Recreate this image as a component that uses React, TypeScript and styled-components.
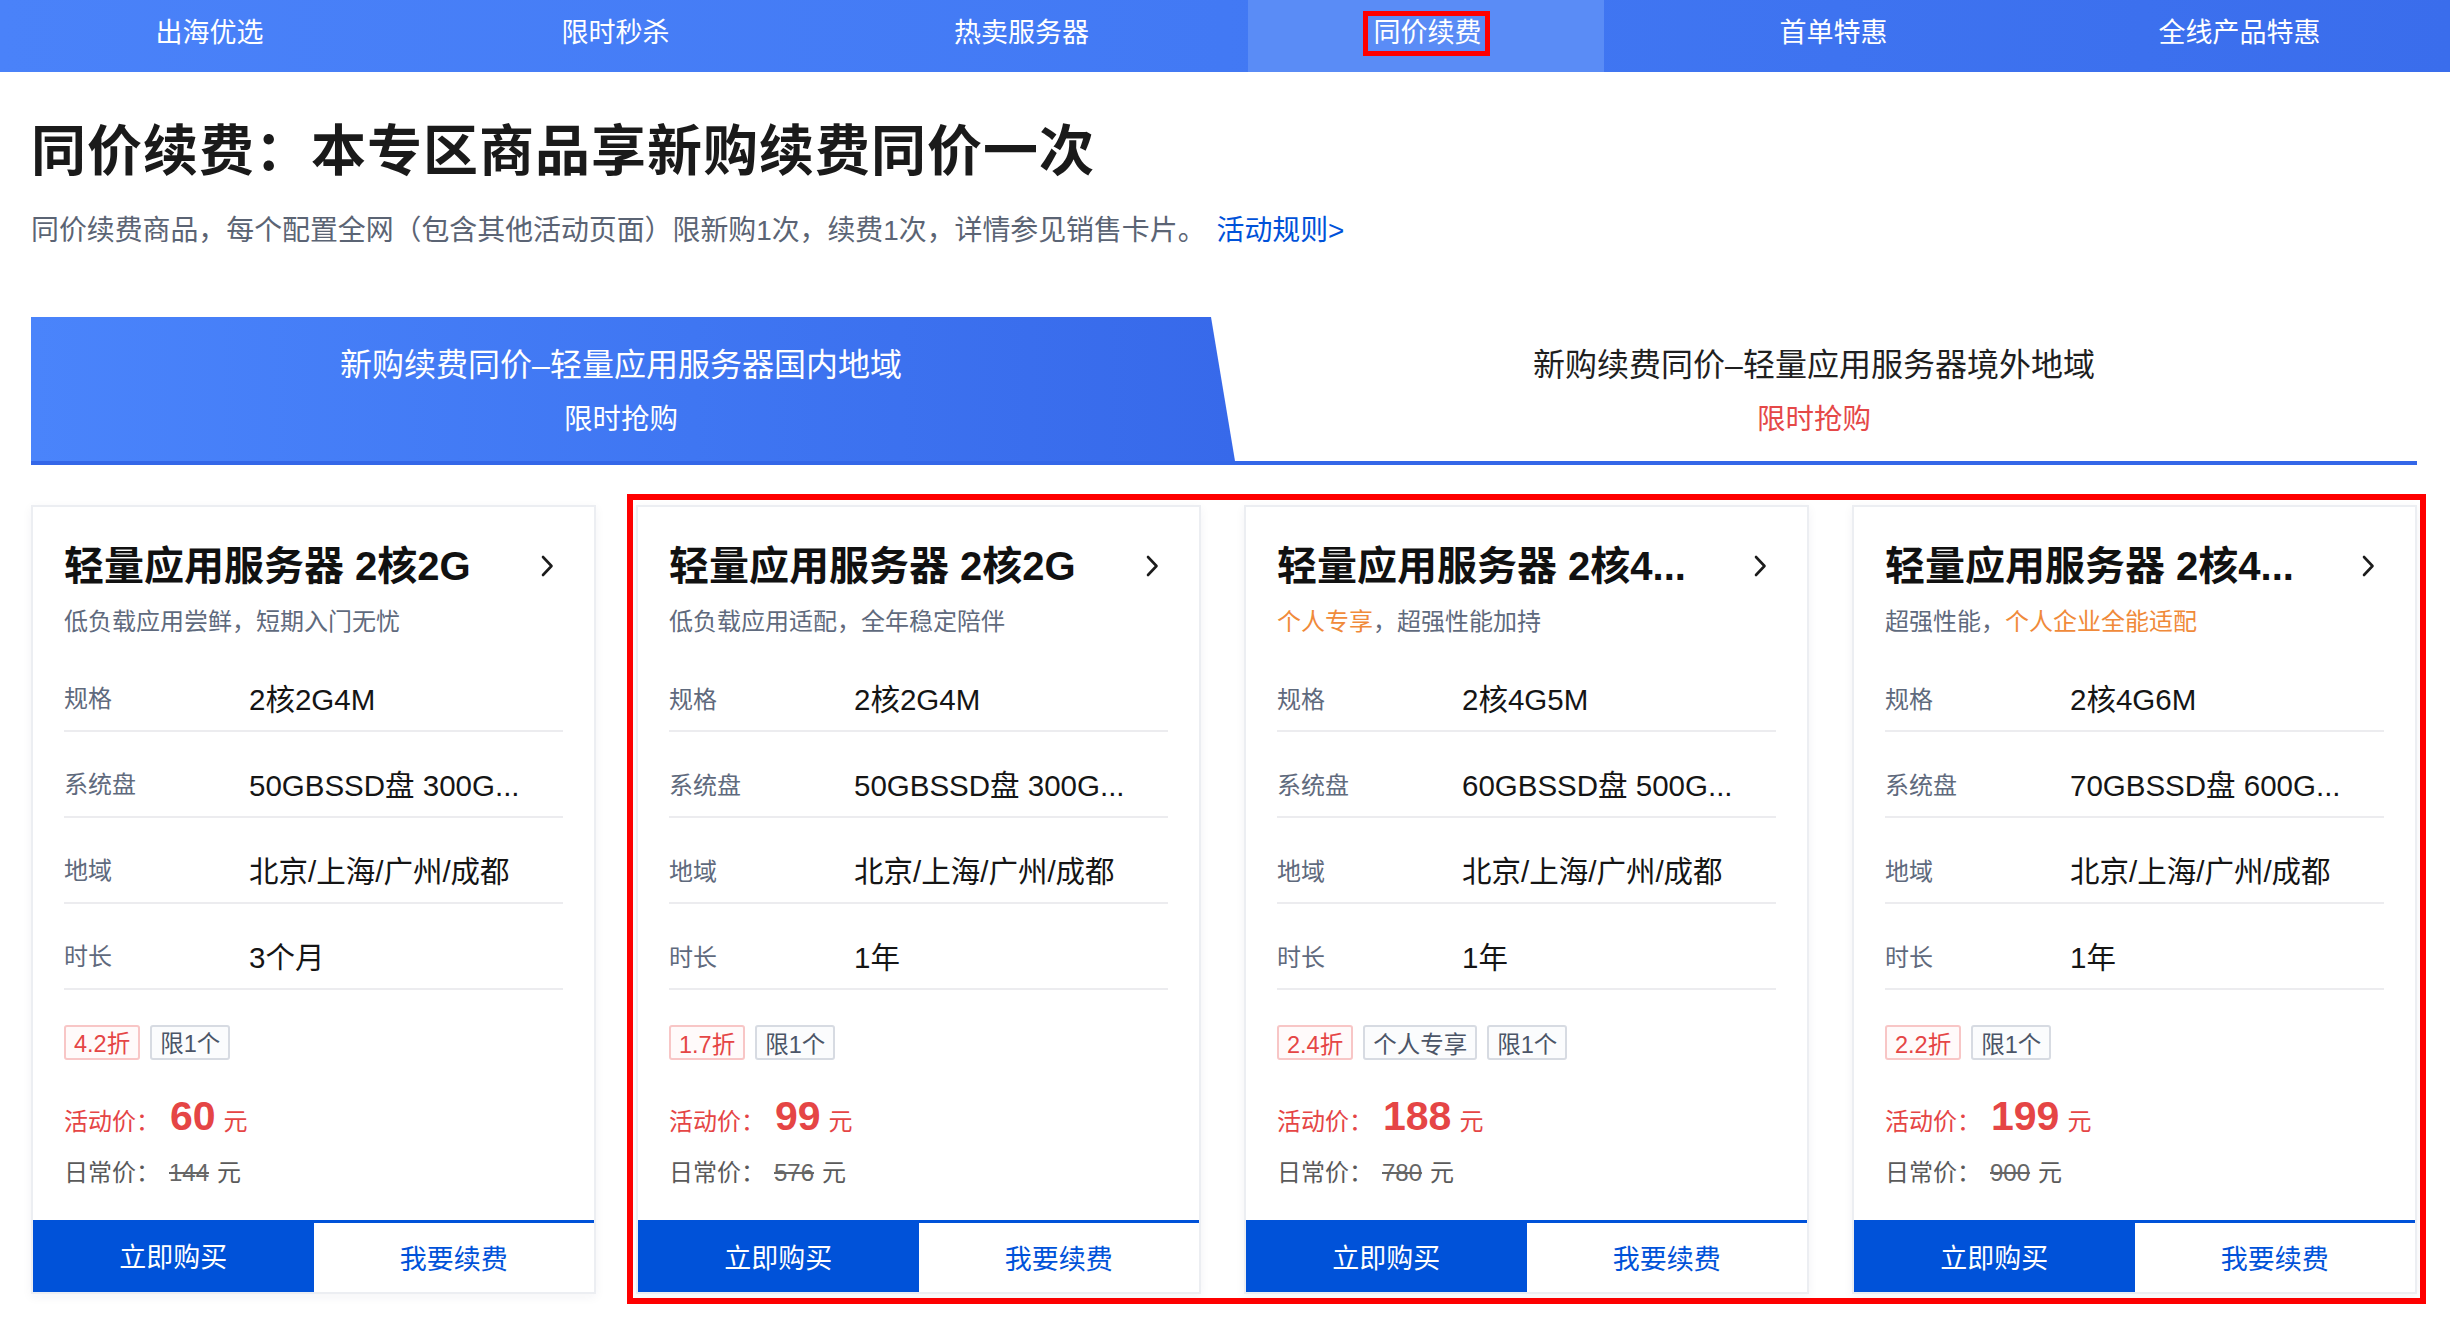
import React from "react";
import styled, { createGlobalStyle, css } from "styled-components";

const GlobalStyle = createGlobalStyle`
  html, body {
    margin: 0;
    padding: 0;
    background: #ffffff;
  }
  body {
    font-family: "Liberation Sans", "Noto Sans CJK SC", sans-serif;
    color: #222;
  }
  * { box-sizing: border-box; }
`;

const Page = styled.div`
  width: 2450px;
  min-height: 1322px;
  background: #fff;
`;

/* ---------- top navigation ---------- */
const Nav = styled.nav`
  height: 72px;
  display: flex;
  gap: 50px;
  padding: 0 34px 0 30px;
  background: linear-gradient(90deg, #4a82f9 0%, #4279f4 50%, #3a6dec 100%);
`;

const NavItem = styled.div<{ $active?: boolean }>`
  flex: 0 0 356px;
  display: flex;
  align-items: center;
  justify-content: center;
  padding-bottom: 6px;
  color: #fff;
  font-size: 27px;
  ${(p) =>
    p.$active &&
    css`
      background: #5a8cf6;
    `}
`;

const NavLabel = styled.span<{ $marked?: boolean }>`
  line-height: 35px;
  padding: 0 3px 0 6px;
  border: 5px solid transparent;
  ${(p) =>
    p.$marked &&
    css`
      border-color: #f00;
    `}
`;

/* ---------- heading ---------- */
const Content = styled.main`
  padding: 0 0 0 31px;
`;

const Heading = styled.h1`
  margin: 44px 0 0;
  font-size: 55px;
  line-height: 70px;
  font-weight: 600;
  color: #1a1a1a;
  letter-spacing: 1px;
`;

const Intro = styled.p`
  margin: 25px 0 0;
  font-size: 27.9px;
  line-height: 40px;
  color: #5b6474;
`;

const RuleLink = styled.a`
  margin-left: 11px;
  color: #0052d9;
  text-decoration: none;
`;

/* ---------- tabs ---------- */
const TabBar = styled.div`
  margin-top: 66px;
  width: 2386px;
  display: flex;
  border-bottom: 4px solid #3467e8;
`;

const Tab = styled.div<{ $active?: boolean }>`
  height: 144px;
  display: flex;
  flex-direction: column;
  align-items: center;
  padding: 28px 24px 0 0;
  ${(p) =>
    p.$active
      ? css`
          flex: 0 0 1204px;
          background: linear-gradient(90deg, #4a84fb 0%, #3f76f2 55%, #3769ea 100%);
          clip-path: polygon(0 0, calc(100% - 24px) 0, 100% 100%, 0 100%);
          color: #fff;
        `
      : css`
          flex: 1;
          color: #1f1f1f;
        `}
`;

const TabTitle = styled.div`
  font-size: 32px;
  line-height: 40px;
`;

const TabSub = styled.div<{ $active?: boolean }>`
  margin-top: 16px;
  font-size: 28.5px;
  line-height: 36px;
  color: ${(p) => (p.$active ? "#ffffff" : "#e54848")};
`;

/* ---------- cards ---------- */
const CardRow = styled.div`
  margin-top: 29px;
  display: flex;
  align-items: center;
  gap: 31px;
`;

const Highlight = styled.div`
  display: flex;
  gap: 43px;
  border: 6px solid #f00;
  padding: 5px 3px 4px 3px;
`;

const Card = styled.div`
  width: 565px;
  height: 789px;
  flex: none;
  display: flex;
  flex-direction: column;
  background: #fff;
  border: 2px solid #eceef2;
  box-shadow: 0 3px 10px rgba(30, 40, 70, 0.05);
`;

const CardBody = styled.div`
  padding: 34px 31px 0;
`;

const TitleRow = styled.div`
  display: flex;
  align-items: center;
  height: 50px;
`;

const CardTitle = styled.div`
  flex: 1;
  min-width: 0;
  font-size: 40px;
  line-height: 50px;
  font-weight: 600;
  color: #111;
  white-space: nowrap;
  overflow: hidden;
  text-overflow: ellipsis;
`;

const Chevron = styled.svg`
  flex: none;
  width: 16px;
  height: 24px;
  margin-right: 8px;
`;

const Subtitle = styled.div`
  margin-top: 14px;
  font-size: 24px;
  line-height: 34px;
  color: #5f6a7d;
`;

const Accent = styled.span`
  color: #f08a3a;
`;

const SpecList = styled.div`
  margin-top: 7px;
`;

const SpecRow = styled.div`
  height: 86px;
  padding-top: 18px;
  display: flex;
  align-items: center;
  border-bottom: 2px solid #ececef;
`;

const SpecLabel = styled.div`
  width: 185px;
  flex: none;
  font-size: 24px;
  color: #5f6a7d;
`;

const SpecValue = styled.div`
  font-size: 29.5px;
  color: #151515;
  white-space: nowrap;
`;

const TagRow = styled.div`
  margin-top: 35px;
  display: flex;
  gap: 10px;
`;

const Tag = styled.span<{ $red?: boolean }>`
  height: 35px;
  display: inline-flex;
  align-items: center;
  padding: 0 8px;
  font-size: 23.5px;
  border-radius: 3px;
  ${(p) =>
    p.$red
      ? css`
          color: #e54545;
          border: 2px solid #f8c6c6;
          background: #fffafa;
        `
      : css`
          color: #4b5567;
          border: 2px solid #d7dbe2;
          background: #fbfcfd;
        `}
`;

const PriceRow = styled.div`
  margin-top: 28px;
  height: 56px;
  display: flex;
  align-items: baseline;
  color: #e54545;
`;

const PriceLabel = styled.span`
  font-size: 24px;
`;

const PriceValue = styled.span`
  margin-left: 10px;
  font-size: 41px;
  font-weight: 600;
  line-height: 56px;
`;

const Unit = styled.span`
  margin-left: 8px;
  font-size: 24px;
`;

const RegularRow = styled.div`
  margin-top: 12px;
  height: 34px;
  display: flex;
  align-items: baseline;
  font-size: 24px;
  line-height: 34px;
  color: #5a5a5a;
`;

const Struck = styled.span`
  margin-left: 9px;
  text-decoration: line-through;
  color: #666;
`;

const ButtonBar = styled.div`
  margin-top: auto;
  height: 72px;
  display: flex;
`;

const Button = styled.button<{ $primary?: boolean }>`
  flex: 1;
  border: none;
  font-family: inherit;
  font-size: 27px;
  cursor: pointer;
  ${(p) =>
    p.$primary
      ? css`
          background: #0052d9;
          color: #fff;
        `
      : css`
          background: #fff;
          color: #0052d9;
          border-top: 3px solid #0052d9;
        `}
`;

type Sub = { t: string; accent?: boolean };
type CardData = {
  title: string;
  sub: Sub[];
  spec: string;
  disk: string;
  region: string;
  dur: string;
  tags: { t: string; red?: boolean }[];
  price: string;
  orig: string;
};

const cards: CardData[] = [
  {
    title: "轻量应用服务器 2核2G",
    sub: [{ t: "低负载应用尝鲜，短期入门无忧" }],
    spec: "2核2G4M",
    disk: "50GBSSD盘 300G...",
    region: "北京/上海/广州/成都",
    dur: "3个月",
    tags: [{ t: "4.2折", red: true }, { t: "限1个" }],
    price: "60",
    orig: "144",
  },
  {
    title: "轻量应用服务器 2核2G",
    sub: [{ t: "低负载应用适配，全年稳定陪伴" }],
    spec: "2核2G4M",
    disk: "50GBSSD盘 300G...",
    region: "北京/上海/广州/成都",
    dur: "1年",
    tags: [{ t: "1.7折", red: true }, { t: "限1个" }],
    price: "99",
    orig: "576",
  },
  {
    title: "轻量应用服务器 2核4...",
    sub: [{ t: "个人专享", accent: true }, { t: "，超强性能加持" }],
    spec: "2核4G5M",
    disk: "60GBSSD盘 500G...",
    region: "北京/上海/广州/成都",
    dur: "1年",
    tags: [{ t: "2.4折", red: true }, { t: "个人专享" }, { t: "限1个" }],
    price: "188",
    orig: "780",
  },
  {
    title: "轻量应用服务器 2核4...",
    sub: [{ t: "超强性能，" }, { t: "个人企业全能适配", accent: true }],
    spec: "2核4G6M",
    disk: "70GBSSD盘 600G...",
    region: "北京/上海/广州/成都",
    dur: "1年",
    tags: [{ t: "2.2折", red: true }, { t: "限1个" }],
    price: "199",
    orig: "900",
  },
];

const ProductCard: React.FC<{ d: CardData }> = ({ d }) => (
  <Card>
    <CardBody>
      <TitleRow>
        <CardTitle>{d.title}</CardTitle>
        <Chevron viewBox="0 0 16 24" aria-hidden>
          <path d="M4 3 L12.5 12 L4 21" fill="none" stroke="#1c1c1c" strokeWidth="2.6" strokeLinecap="round" strokeLinejoin="round" />
        </Chevron>
      </TitleRow>
      <Subtitle>
        {d.sub.map((s, i) => (s.accent ? <Accent key={i}>{s.t}</Accent> : <span key={i}>{s.t}</span>))}
      </Subtitle>
      <SpecList>
        <SpecRow>
          <SpecLabel>规格</SpecLabel>
          <SpecValue>{d.spec}</SpecValue>
        </SpecRow>
        <SpecRow>
          <SpecLabel>系统盘</SpecLabel>
          <SpecValue>{d.disk}</SpecValue>
        </SpecRow>
        <SpecRow>
          <SpecLabel>地域</SpecLabel>
          <SpecValue>{d.region}</SpecValue>
        </SpecRow>
        <SpecRow>
          <SpecLabel>时长</SpecLabel>
          <SpecValue>{d.dur}</SpecValue>
        </SpecRow>
      </SpecList>
      <TagRow>
        {d.tags.map((t, i) => (
          <Tag key={i} $red={t.red}>
            {t.t}
          </Tag>
        ))}
      </TagRow>
      <PriceRow>
        <PriceLabel>活动价：</PriceLabel>
        <PriceValue>{d.price}</PriceValue>
        <Unit>元</Unit>
      </PriceRow>
      <RegularRow>
        <span>日常价：</span>
        <Struck>{d.orig}</Struck>
        <Unit>元</Unit>
      </RegularRow>
    </CardBody>
    <ButtonBar>
      <Button $primary>立即购买</Button>
      <Button>我要续费</Button>
    </ButtonBar>
  </Card>
);

const navItems = ["出海优选", "限时秒杀", "热卖服务器", "同价续费", "首单特惠", "全线产品特惠"];

export default function App() {
  return (
    <Page>
      <GlobalStyle />
      <Nav>
        {navItems.map((n) => (
          <NavItem key={n} $active={n === "同价续费"}>
            <NavLabel $marked={n === "同价续费"}>{n}</NavLabel>
          </NavItem>
        ))}
      </Nav>
      <Content>
        <Heading>同价续费：本专区商品享新购续费同价一次</Heading>
        <Intro>
          同价续费商品，每个配置全网（包含其他活动页面）限新购1次，续费1次，详情参见销售卡片。
          <RuleLink href="#">活动规则&gt;</RuleLink>
        </Intro>
        <TabBar>
          <Tab $active>
            <TabTitle>新购续费同价–轻量应用服务器国内地域</TabTitle>
            <TabSub $active>限时抢购</TabSub>
          </Tab>
          <Tab>
            <TabTitle>新购续费同价–轻量应用服务器境外地域</TabTitle>
            <TabSub>限时抢购</TabSub>
          </Tab>
        </TabBar>
        <CardRow>
          <ProductCard d={cards[0]} />
          <Highlight>
            {cards.slice(1).map((c, i) => (
              <ProductCard key={i} d={c} />
            ))}
          </Highlight>
        </CardRow>
      </Content>
    </Page>
  );
}
